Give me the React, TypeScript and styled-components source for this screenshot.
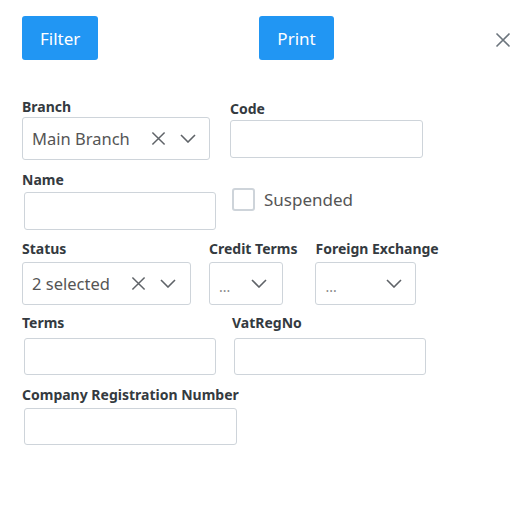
import styled, { createGlobalStyle } from "styled-components";

const GlobalStyle = createGlobalStyle`
    body {
        margin: 0;
        background: #ffffff;
        font-family: "Noto Sans", "Open Sans", sans-serif;
        color: #343a40;
    }
`;

const Page = styled.div`
    width: 532px;
    height: 505px;
    padding: 16px 21px 0 22px;
    box-sizing: border-box;
`;

const Toolbar = styled.div`
    display: flex;
    align-items: center;
    height: 44px;
`;

const Button = styled.button<{ $gap?: number }>`
    height: 44px;
    padding: 0 18px;
    margin-left: ${(p) => p.$gap ?? 0}px;
    border: none;
    border-radius: 3px;
    background: #2196f3;
    color: #ffffff;
    font-family: inherit;
    font-size: 17px;
    cursor: pointer;
`;

const CloseButton = styled.button`
    margin: 4px 0 0 auto;
    width: 16px;
    height: 16px;
    padding: 0;
    border: none;
    background: none;
    display: flex;
    align-items: center;
    justify-content: center;
    cursor: pointer;
`;

const Form = styled.div`
    margin-top: 39px;
    display: flex;
    flex-direction: column;
`;

const Row = styled.div<{ $gap: number; $top?: number }>`
    display: flex;
    align-items: flex-start;
    column-gap: ${(p) => p.$gap}px;
    margin-top: ${(p) => p.$top ?? 0}px;
`;

const Field = styled.div<{ $top?: number }>`
    display: flex;
    flex-direction: column;
    margin-top: ${(p) => p.$top ?? 0}px;
`;

const Label = styled.label`
    font-size: 14px;
    font-weight: 700;
    line-height: 15px;
    padding-bottom: 4px;
    color: #343a40;
    white-space: nowrap;
`;

const Input = styled.input<{ $w: number; $h?: number; $top?: number; $indent?: number }>`
    width: ${(p) => p.$w}px;
    height: ${(p) => p.$h ?? 38}px;
    margin: ${(p) => p.$top ?? 0}px 0 0 ${(p) => p.$indent ?? 2}px;
    box-sizing: border-box;
    border: 1px solid #ced4da;
    border-radius: 3px;
    background: #fff;
`;

const Select = styled.div<{ $w: number; $top?: number; $right?: number }>`
    width: ${(p) => p.$w}px;
    height: 43px;
    margin-top: ${(p) => p.$top ?? 0}px;
    box-sizing: border-box;
    border: 1px solid #ced4da;
    border-radius: 3px;
    display: flex;
    align-items: center;
    padding: 0 ${(p) => p.$right ?? 13}px 0 9px;
    font-size: 16.5px;
    color: #555;
`;

const Value = styled.span<{ $dim?: boolean }>`
    flex: 1;
    white-space: nowrap;
    color: ${(p) => (p.$dim ? "#888" : "#555")};
    font-size: ${(p) => (p.$dim ? "14px" : "16.5px")};
    padding-top: ${(p) => (p.$dim ? "6px" : "0")};
`;

const Icons = styled.span`
    display: flex;
    align-items: center;
    gap: 14px;
`;

const CheckRow = styled.label`
    display: flex;
    align-items: center;
    gap: 9px;
    margin-top: 16px;
    font-size: 17px;
    color: #555;
`;

const Box = styled.span`
    width: 23px;
    height: 23px;
    box-sizing: border-box;
    border: 2px solid #ced4da;
    border-radius: 3px;
`;

const Cross = ({ size = 15, color = "#5f6368" }: { size?: number; color?: string }) => (
    <svg width={size} height={size} viewBox="0 0 16 16">
        <path d="M1.5 1.5 L14.5 14.5 M14.5 1.5 L1.5 14.5" stroke={color} strokeWidth="1.6" fill="none" />
    </svg>
);

const Chevron = () => (
    <svg width="16" height="9" viewBox="0 0 16 9">
        <path d="M1 1 L8 8 L15 1" stroke="#5f6368" strokeWidth="1.6" fill="none" />
    </svg>
);

export default function App() {
    return (
        <Page>
            <GlobalStyle />
            <Toolbar>
                <Button>Filter</Button>
                <Button $gap={161}>Print</Button>
                <CloseButton aria-label="close">
                    <Cross size={16} color="#6c757d" />
                </CloseButton>
            </Toolbar>
            <Form>
                <Row $gap={20}>
                    <Field>
                        <Label>Branch</Label>
                        <Select $w={188} $top={-1}>
                            <Value>Main Branch</Value>
                            <Icons>
                                <Cross />
                                <Chevron />
                            </Icons>
                        </Select>
                    </Field>
                    <Field $top={2}>
                        <Label>Code</Label>
                        <Input $w={193} $indent={0} />
                    </Field>
                </Row>
                <Row $gap={16} $top={12}>
                    <Field>
                        <Label>Name</Label>
                        <Input $w={192} $top={1} />
                    </Field>
                    <CheckRow>
                        <Box />
                        Suspended
                    </CheckRow>
                </Row>
                <Row $gap={18} $top={11}>
                    <Field>
                        <Label>Status</Label>
                        <Select $w={169} $top={2} $right={14}>
                            <Value>2 selected</Value>
                            <Icons>
                                <Cross />
                                <Chevron />
                            </Icons>
                        </Select>
                    </Field>
                    <Field>
                        <Label>Credit Terms</Label>
                        <Select $w={74} $top={2} $right={15}>
                            <Value $dim>...</Value>
                            <Chevron />
                        </Select>
                    </Field>
                    <Field>
                        <Label>Foreign Exchange</Label>
                        <Select $w={101} $top={2}>
                            <Value $dim>...</Value>
                            <Chevron />
                        </Select>
                    </Field>
                </Row>
                <Row $gap={16} $top={10}>
                    <Field>
                        <Label>Terms</Label>
                        <Input $w={192} $h={37} $top={4} />
                    </Field>
                    <Field>
                        <Label>VatRegNo</Label>
                        <Input $w={192} $h={37} $top={4} />
                    </Field>
                </Row>
                <Row $gap={0} $top={12}>
                    <Field>
                        <Label>Company Registration Number</Label>
                        <Input $w={213} $h={37} $top={2} />
                    </Field>
                </Row>
            </Form>
        </Page>
    );
}
